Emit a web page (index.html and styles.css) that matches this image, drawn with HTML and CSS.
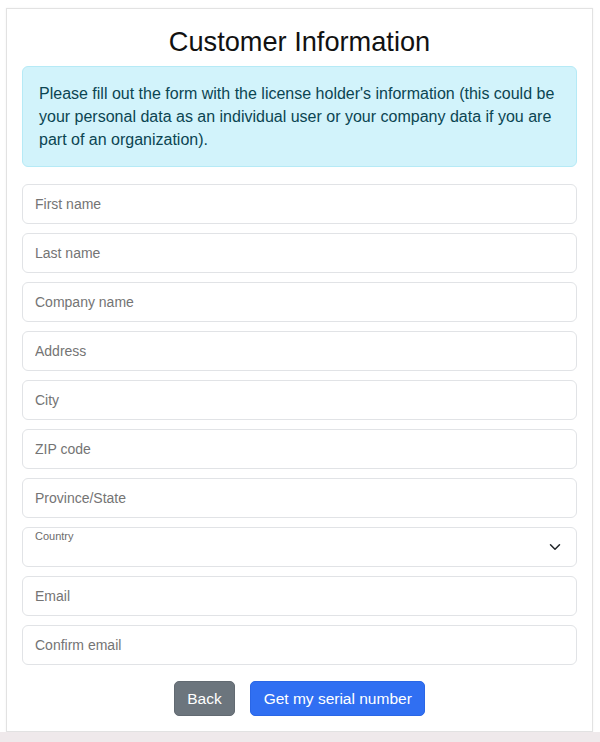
FILE: index.html
```html
<!DOCTYPE html>
<html lang="en">
<head>
    <meta charset="UTF-8">
    <meta name="viewport" content="width=device-width, initial-scale=1.0">
    <title>Customer Information</title>
    <link rel="stylesheet" href="styles.css">
</head>
<body>
    <div class="page">
        <div class="card">
            <h1>Customer Information</h1>
            <div class="alert-info">
                Please fill out the form with the license holder's information (this could be your personal data as an individual user or your company data if you are part of an organization).
            </div>
            <form id="customerForm" class="field-list">
                <input type="text" class="field" id="first_name" placeholder="First name">
                <input type="text" class="field" id="last_name" placeholder="Last name">
                <input type="text" class="field" id="company" placeholder="Company name">
                <input type="text" class="field" id="address" placeholder="Address">
                <input type="text" class="field" id="city" placeholder="City">
                <input type="text" class="field" id="zip" placeholder="ZIP code">
                <input type="text" class="field" id="province" placeholder="Province/State">
                <div class="select-wrap">
                    <label for="country" class="select-label">Country</label>
                    <select id="country" class="field select-field">
                        <option value=""></option>
                    </select>
                    <svg class="chevron" width="12" height="12" viewBox="0 0 16 16">
                        <path d="m2 5 6 6 6-6" fill="none" stroke="#212529" stroke-width="2" stroke-linecap="round" stroke-linejoin="round"/>
                    </svg>
                </div>
                <input type="email" class="field" id="email" placeholder="Email">
                <input type="email" class="field" id="email_confirm" placeholder="Confirm email">
                <div class="actions">
                    <button type="button" class="btn btn-secondary">Back</button>
                    <button type="submit" class="btn btn-primary">Get my serial number</button>
                </div>
            </form>
        </div>
    </div>
    <div class="footer-strip"></div>
</body>
</html>
```

FILE: styles.css
```css
body {
    margin: 0;
    font-family: "Liberation Sans", Arial, sans-serif;
    color: #212529;
    background-color: #fff;
}
.page {
    padding: 8px 7px 0 6px;
}
.card {
    border: 1px solid #e2e2e2;
    box-shadow: 0 0 2px rgba(0,0,0,0.06);
    padding: 17px 15px 15px;
    background-color: #fff;
}
h1 {
    margin: 0 0 8px;
    font-size: 27.2px;
    line-height: 32px;
    font-weight: 500;
    text-align: center;
    color: #111;
}
.alert-info {
    background-color: #d2f3fb;
    border: 1px solid #b6eaf6;
    color: #0b4552;
    border-radius: 6px;
    padding: 15px 16px;
    font-size: 16px;
    line-height: 23px;
    margin-bottom: 17px;
}
.field-list {
    display: flex;
    flex-direction: column;
    gap: 9px;
}
.field {
    display: block;
    width: 100%;
    height: 40px;
    box-sizing: border-box;
    padding: 0 12px;
    border: 1px solid #e1e3e6;
    border-radius: 6px;
    font-family: inherit;
    font-size: 14px;
    color: #212529;
    background-color: #fff;
    outline: none;
}
.field::placeholder {
    color: #747474;
}
.select-wrap {
    position: relative;
}
.select-field {
    appearance: none;
    -webkit-appearance: none;
}
.select-label {
    position: absolute;
    top: 3px;
    left: 13px;
    font-size: 11px;
    line-height: 12px;
    color: #6c6c6c;
}
.chevron {
    position: absolute;
    right: 16px;
    top: 14px;
}
.actions {
    display: flex;
    justify-content: center;
    gap: 15px;
    margin-top: 7px;
}
.btn {
    height: 35px;
    padding: 0 12.5px;
    border-radius: 5px;
    font-family: inherit;
    font-size: 15.5px;
    color: #fff;
    cursor: pointer;
}
.btn-secondary {
    background-color: #6c757d;
    border: 1px solid #626a72;
}
.btn-primary {
    background-color: #306ff2;
    border: 1px solid #2a66e6;
}
.footer-strip {
    height: 20px;
    background-color: #efe9eb;
}
```
